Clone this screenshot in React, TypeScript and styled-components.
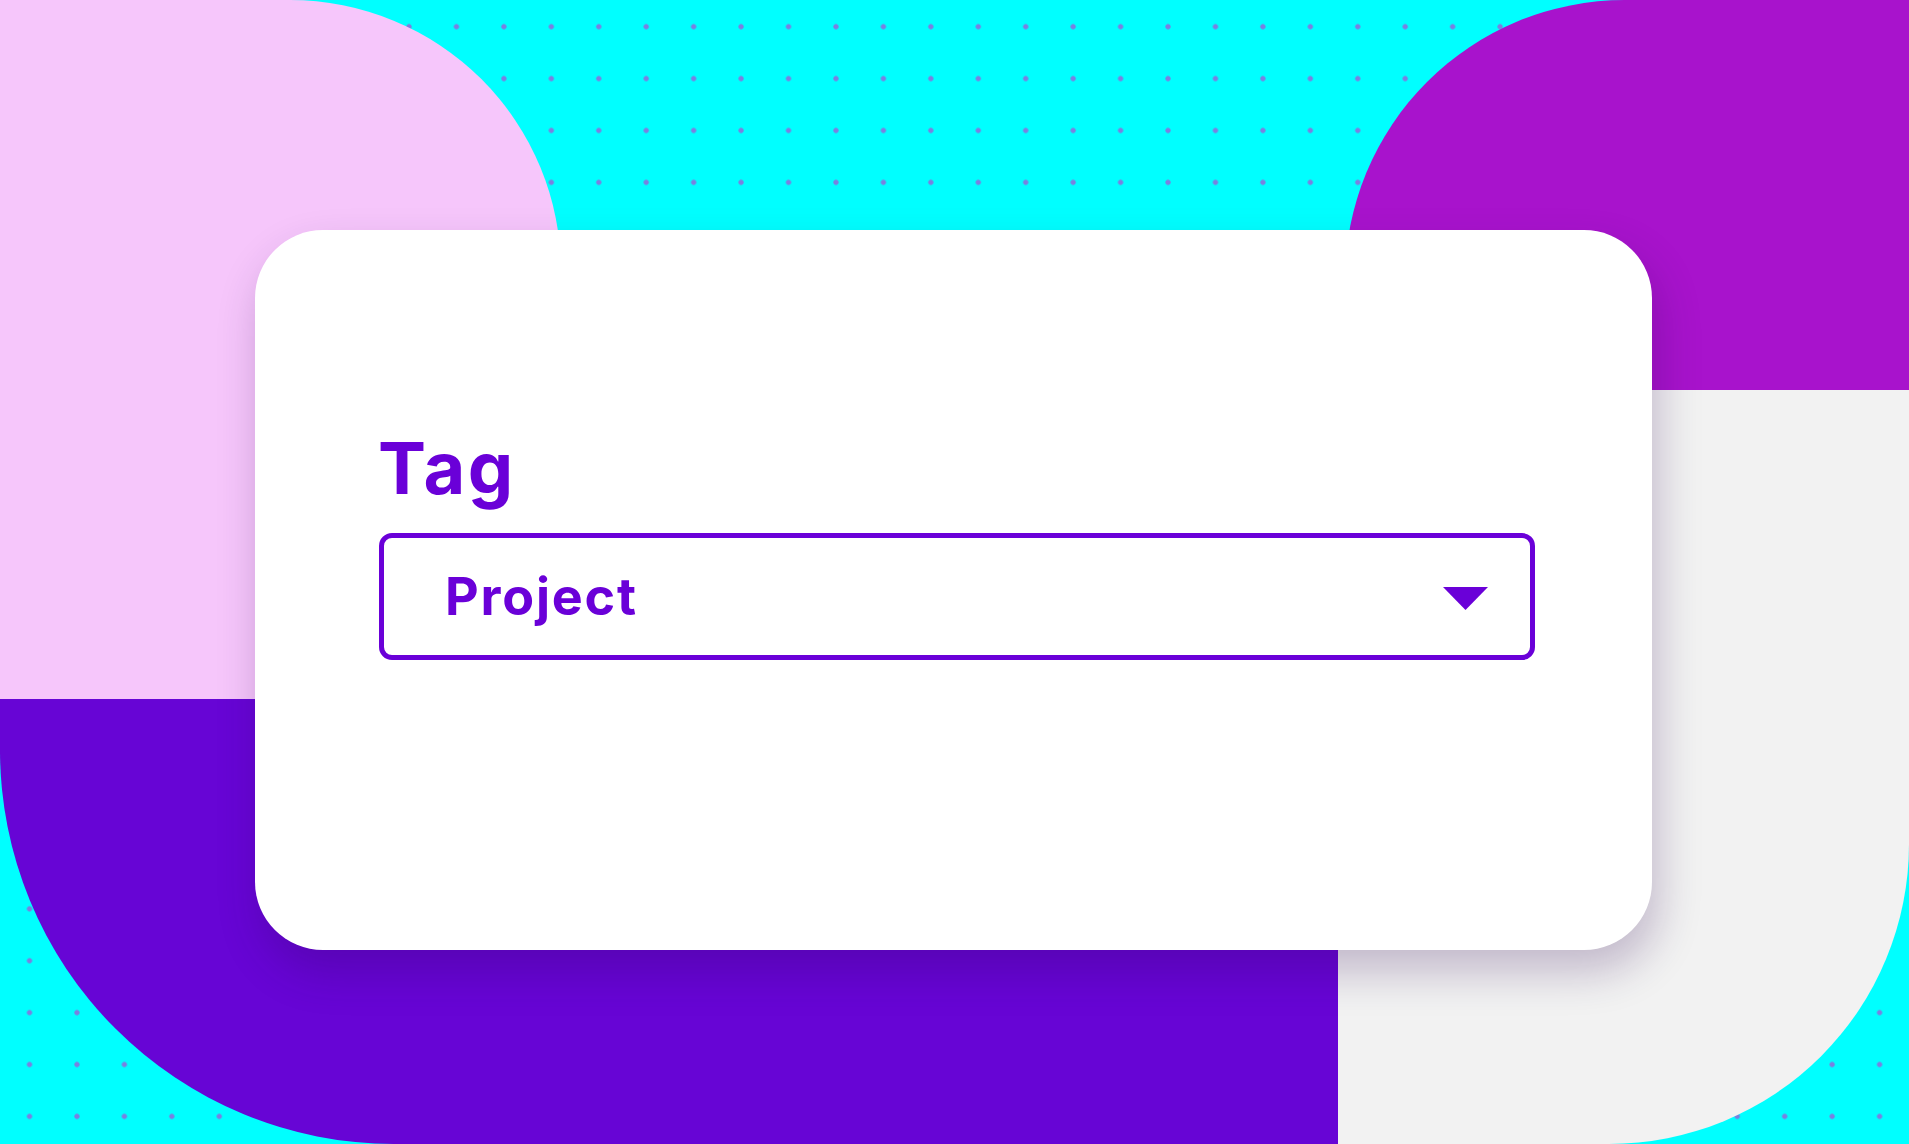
import React from "react";
import styled, { createGlobalStyle } from "styled-components";

const GlobalStyle = createGlobalStyle`
  html, body {
    margin: 0;
    padding: 0;
    overflow: hidden;
    background: #00ffff;
  }
  body {
    font-family: Inter, "Noto Sans", "Liberation Sans", sans-serif;
  }
`;

const Page = styled.div`
  width: 1909px;
  height: 1144px;
  overflow: hidden;
  display: grid;
  grid-template-columns: 255px 306px 777px 7px 307px 257px;
  grid-template-rows: 230px 160px 309px 251px 194px;
  background-color: #00ffff;
  background-image: radial-gradient(circle, #7a80e0 0 2.3px, transparent 3px);
  background-size: 47.45px 51.9px;
  background-position: 5.8px 0.75px;
`;

type ShapeProps = {
  $col: string;
  $row: string;
  $color: string;
  $radius: string;
};

const Shape = styled.div<ShapeProps>`
  grid-column: ${(p) => p.$col};
  grid-row: ${(p) => p.$row};
  background: ${(p) => p.$color};
  border-radius: ${(p) => p.$radius};
`;

const Card = styled.div`
  grid-column: 2 / 6;
  grid-row: 2 / 5;
  z-index: 1;
  background: #ffffff;
  border-radius: 68px;
  box-shadow: 6px 22px 44px rgba(40, 0, 80, 0.24);
  box-sizing: border-box;
  padding: 202px 117px 0 124px;
  display: flex;
  flex-direction: column;
`;

const Label = styled.div`
  font-family: Inter, "Noto Sans", sans-serif;
  font-weight: 700;
  font-size: 72px;
  line-height: 72px;
  color: #6a00d8;
  margin-left: -1px;
  letter-spacing: 2.6px;
`;

const Select = styled.div`
  margin-top: 29px;
  height: 127px;
  box-sizing: border-box;
  border: 5px solid #6a00d8;
  border-radius: 13px;
  display: flex;
  align-items: center;
  justify-content: space-between;
  padding: 0 42px 0 61px;
`;

const Value = styled.span`
  font-family: Inter, "Noto Sans", sans-serif;
  font-weight: 700;
  font-size: 52px;
  line-height: 52px;
  color: #6a00d8;
  letter-spacing: 1.8px;
`;

const Caret = styled.svg`
  width: 45px;
  height: 23px;
  margin-top: 4px;
  display: block;
`;

export default function App() {
  return (
    <>
      <GlobalStyle />
      <Page>
        <Shape $col="1 / 3" $row="1 / 4" $color="#f6c6fb" $radius="0 271px 0 0" />
        <Shape $col="5 / 7" $row="1 / 3" $color="#a813cc" $radius="280px 0 0 0" />
        <Shape $col="4 / 7" $row="3 / 6" $color="#f2f2f2" $radius="0 0 300px 0" />
        <Shape $col="1 / 4" $row="4 / 6" $color="#6705d5" $radius="0 0 0 394px" />
        <Card>
          <Label>Tag</Label>
          <Select>
            <Value>Project</Value>
            <Caret viewBox="0 0 45 23" aria-hidden="true">
              <polygon points="0,0 45,0 22.5,23" fill="#6a00d8" />
            </Caret>
          </Select>
        </Card>
      </Page>
    </>
  );
}
